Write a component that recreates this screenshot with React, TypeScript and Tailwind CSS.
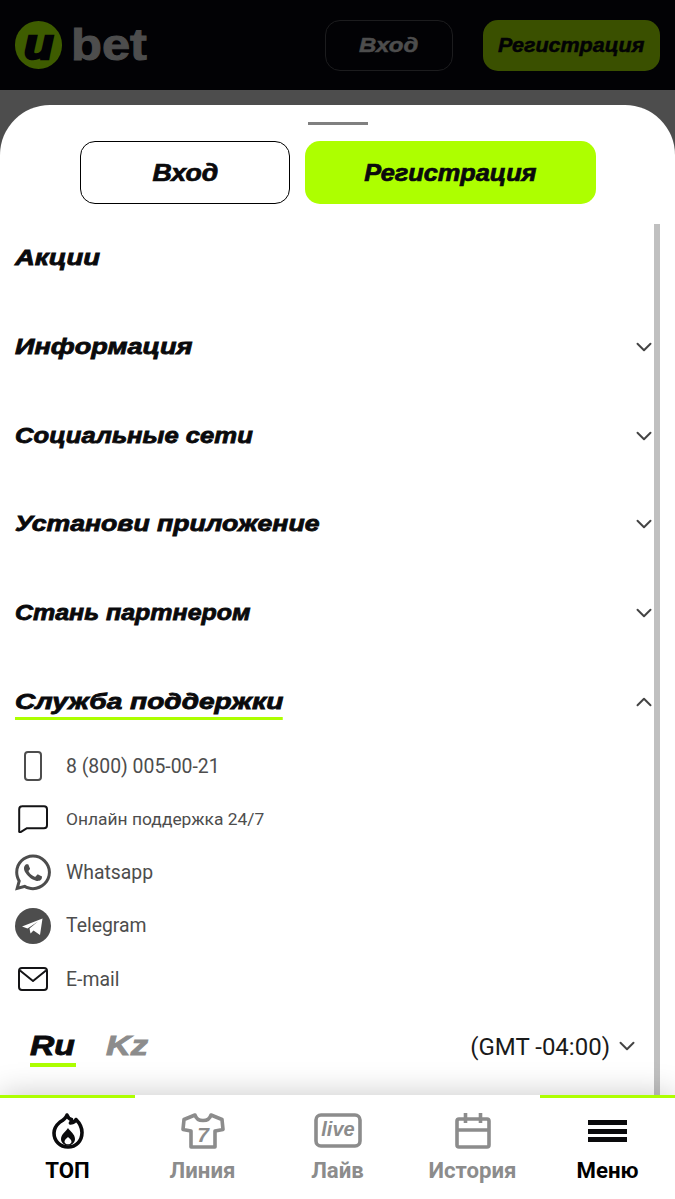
import React from "react";
import { ChevronDown, ChevronUp } from "lucide-react";
import { FaWhatsapp } from "react-icons/fa";

const wide = "font-['Liberation_Sans',sans-serif] font-bold italic whitespace-nowrap";

function MenuRow({ label, open, arrow = true, scale }: { label: string; open?: boolean; arrow?: boolean; scale: string }) {
  return (
    <div className="flex h-[68px] shrink-0 items-center justify-between">
      <span className={`${wide} relative origin-left ${scale} text-[22px] leading-[28px] text-[#0a0a0c] [-webkit-text-stroke:0.8px_#0a0a0c]`}>
        {label}
        {open && <span className="absolute bottom-[-4px] left-0 right-0 h-[3px] bg-[#adff00]" />}
      </span>
      {arrow &&
        (open ? (
          <ChevronUp className="mr-[-3px] size-[26px] text-[#444]" strokeWidth={1.8} />
        ) : (
          <ChevronDown className="mr-[-3px] size-[26px] text-[#444]" strokeWidth={1.8} />
        ))}
    </div>
  );
}

function Contact({ icon, label, small }: { icon: React.ReactNode; label: string; small?: boolean }) {
  return (
    <div className="flex h-[53.3px] items-center">
      <div className="flex w-[36px] justify-center">{icon}</div>
      <span className={`ml-[15px] font-['Roboto',sans-serif] text-[#4d4d4d] ${small ? "text-[17.4px]" : "text-[19.4px]"}`}>{label}</span>
    </div>
  );
}

function NavItem({ icon, label, active, line }: { icon: React.ReactNode; label: string; active?: boolean; line?: boolean }) {
  return (
    <div className={`flex flex-col items-center border-t-[3px] pt-[15px] ${line ? "border-[#adff00]" : "border-transparent"}`}>
      <div className="flex h-[36px] items-center justify-center">{icon}</div>
      <span className={`mt-[7px] font-['Roboto',sans-serif] text-[22.2px] font-bold leading-[28px] ${active ? "text-black" : "text-[#8c8c8c]"}`}>{label}</span>
    </div>
  );
}

export default function App() {
  return (
    <div className="flex h-[1199px] w-[675px] flex-col overflow-hidden bg-white">
      <header className="flex h-[90px] shrink-0 items-center bg-[#020205] pl-[15px] pr-[15px]">
        <div className="flex items-center">
          <div className="flex h-[48px] w-[47px] items-center justify-center rounded-full bg-[#3e5c00]">
            <span className="scale-x-[1.15] font-['Liberation_Sans',sans-serif] text-[42px] font-bold italic leading-[40px] text-[#020205] [-webkit-text-stroke:2.5px_#020205]">u</span>
          </div>
          <span className="ml-[9px] origin-left scale-x-[1.15] font-['Liberation_Sans',sans-serif] text-[44px] font-bold leading-[40px] text-[#4d4d4d] [-webkit-text-stroke:1px_#4d4d4d]">bet</span>
        </div>
        <div className="ml-auto flex gap-[30px]">
          <div className="flex h-[51px] w-[128px] items-center justify-center rounded-[15px] border border-[#1c1c1e]">
            <span className={`${wide} scale-x-[1.2] text-[20px] text-[#4d4d4d] [-webkit-text-stroke:0.5px_#4d4d4d]`}>Вход</span>
          </div>
          <div className="flex h-[51px] w-[177px] items-center justify-center rounded-[15px] bg-[#3a5000]">
            <span className={`${wide} scale-x-[1.075] text-[20px] text-[#020205] [-webkit-text-stroke:0.5px_#020205]`}>Регистрация</span>
          </div>
        </div>
      </header>

      <div className="flex min-h-0 flex-1 flex-col bg-[#4d4d4d] pt-[15px]">
        <div className="flex min-h-0 flex-1 flex-col rounded-t-[50px] bg-white">
          <div className="mx-auto mt-[17px] h-[3px] w-[60px] bg-[#808080]" />
          <div className="ml-[80px] mt-[16px] flex gap-[15px]">
            <div className="flex h-[63px] w-[210px] items-center justify-center rounded-[15px] border border-black">
              <span className={`${wide} relative top-[1px] scale-x-[1.16] text-[23px] text-[#0a0a0c] [-webkit-text-stroke:0.7px_#0a0a0c]`}>Вход</span>
            </div>
            <div className="flex h-[63px] w-[291px] items-center justify-center rounded-[15px] bg-[#adff00]">
              <span className={`${wide} relative top-[1px] scale-x-[1.1] text-[23px] text-[#0a0a0c] [-webkit-text-stroke:0.7px_#0a0a0c]`}>Регистрация</span>
            </div>
          </div>

          <div className="mr-[15px] mt-[20px] flex min-h-0 flex-1">
            <div className="min-w-0 flex-1 pl-[15px]">
              <div className="flex flex-col gap-[20.8px]">
                <MenuRow label="Акции" arrow={false} scale="scale-x-[1.25]" />
                <MenuRow label="Информация" scale="scale-x-[1.23]" />
                <MenuRow label="Социальные сети" scale="scale-x-[1.165]" />
                <MenuRow label="Установи приложение" scale="scale-x-[1.21]" />
                <MenuRow label="Стань партнером" scale="scale-x-[1.135]" />
                <MenuRow label="Служба поддержки" open scale="scale-x-[1.275]" />
              </div>
              <div className="mt-[3.500px] flex flex-col">
                <Contact
                  label="8 (800) 005-00-21"
                  icon={
                    <svg width="18" height="30" viewBox="0 0 18 30" fill="none" stroke="#4d4d4d" strokeWidth="2">
                      <rect x="1" y="1" width="16" height="28" rx="3" />
                    </svg>
                  }
                />
                <Contact
                  small
                  label="Онлайн поддержка 24/7"
                  icon={
                    <svg width="30" height="28" viewBox="0 0 30 28" fill="none" stroke="#141416" strokeWidth="2" strokeLinejoin="round">
                      <path d="M4 1.200h22a3 3 0 0 1 3 3v16a3 3 0 0 1-3 3H9l-6 3.600a1 1 0 0 1-1.800-.8V4.200a3 3 0 0 1 3-3z" />
                    </svg>
                  }
                />
                <Contact label="Whatsapp" icon={<FaWhatsapp size={41} color="#4d4d4d" />} />
                <Contact
                  label="Telegram"
                  icon={
                    <svg width="36" height="36" viewBox="0 0 36 36">
                      <circle cx="18" cy="18" r="18" fill="#4d4d4d" />
                      <path d="M7 18.500 27.500 10.500 25 27 18.500 22.500 15.500 25.500 14.500 20.500 23 13.500 12.500 20.500Z" fill="#fff" />
                    </svg>
                  }
                />
                <Contact
                  label="E-mail"
                  icon={
                    <svg width="30" height="24" viewBox="0 0 30 24" fill="none" stroke="#141416" strokeWidth="2" strokeLinejoin="round">
                      <rect x="1" y="1" width="28" height="22" rx="3" />
                      <path d="M2 3.500 15 14 28 3.500" />
                    </svg>
                  }
                />
              </div>
              <div className="mt-[24.500px] flex items-start justify-between">
                <div className="ml-[15px] flex gap-[30px]">
                  <div className="border-b-[4px] border-[#adff00] pb-[1px]">
                    <span className={`${wide} block w-[46px] origin-left scale-x-[1.2] text-[28px] leading-[32px] text-[#0a0a0c] [-webkit-text-stroke:0.9px_#0a0a0c]`}>Ru</span>
                  </div>
                  <span className={`${wide} h-[32px] w-[42px] origin-left scale-x-[1.23] text-[28px] leading-[32px] text-[#8c8c8c] [-webkit-text-stroke:0.9px_#8c8c8c]`}>Kz</span>
                </div>
                <div className="flex items-center pr-[14px]">
                  <span className="relative top-[1px] font-['Roboto',sans-serif] text-[24px] leading-[32px] text-[#1a1a1a]">(GMT -04:00)</span>
                  <ChevronDown className="ml-[4px] size-[26px] text-[#444]" strokeWidth={1.8} />
                </div>
              </div>
            </div>
            <div className="w-[6px] shrink-0 bg-[#c0c0c0]" />
          </div>
        </div>
      </div>

      <nav className="relative z-10 grid h-[104px] shrink-0 grid-cols-5 bg-white shadow-[0_0_30px_rgba(0,0,0,0.22)]">
        <NavItem
          active
          line
          label="ТОП"
          icon={
            <svg width="32" height="36" viewBox="0 0 32 36" fill="none" stroke="#0a0a0c" strokeWidth="3.6" strokeLinejoin="round">
              <path d="M15 2c1 3 2.500 4 4.500 4.500 0 1.500-.3 2.600-1 3.500 3-.3 5-2 5.500-3.500C27.500 10 30 14 30 19.500 30 28 24 34 16 34S2 28 2 20c0-5 2.500-8 6-11 3.500-2 6-4 7-7z" />
              <path d="M16 15c1.800 3.200 7 6 7 11 0 3.500-3 6.500-7 6.500S9 29.500 9 26c0-5 5-7.500 7-11z" fill="#0a0a0c" stroke="none" />
              <path d="M16 24c1.200 1.500 3.500 2.400 3.500 4.700 0 1.500-1.500 2.600-3.500 2.600s-3.500-1.100-3.500-2.600c0-2.300 2.300-3.200 3.500-4.700z" fill="#fff" stroke="none" />
            </svg>
          }
        />
        <NavItem
          label="Линия"
          icon={
            <svg width="44" height="36" viewBox="0 0 44 36" fill="none" stroke="#8c8c8c" strokeWidth="3.6" strokeLinejoin="round">
              <path d="M14 2 3 6.500 2 16.500l8 1.500V34h24V18l8-1.500-1-10L30 2c-1 3.500-4 5.500-8 5.500S15 5.500 14 2z" />
              <text x="22" y="29" textAnchor="middle" fontFamily="'Liberation Sans',sans-serif" fontSize="21" fontWeight="700" fontStyle="italic" fill="#8c8c8c" stroke="none">7</text>
            </svg>
          }
        />
        <NavItem
          label="Лайв"
          icon={
            <svg width="48" height="36" viewBox="0 0 48 36" fill="none" stroke="#8c8c8c" strokeWidth="3.6">
              <rect x="2" y="2" width="44" height="31" rx="5" />
              <text x="24" y="23" textAnchor="middle" fontFamily="'Liberation Sans',sans-serif" fontSize="20" fontWeight="700" fontStyle="italic" fill="#8c8c8c" stroke="none">live</text>
            </svg>
          }
        />
        <NavItem
          label="История"
          icon={
            <svg width="36" height="36" viewBox="0 0 36 36" fill="none" stroke="#8c8c8c" strokeWidth="3.6">
              <rect x="2" y="6" width="32" height="28" rx="2" />
              <path d="M2 17h32M10.500 0v10M25.500 0v10" />
            </svg>
          }
        />
        <NavItem
          active
          line
          label="Меню"
          icon={
            <svg width="39" height="24" viewBox="0 0 39 24">
              <path d="M0 1h39v5H0zM0 10h39v5H0zM0 18h39v5H0z" fill="#0a0a0c" />
            </svg>
          }
        />
      </nav>
    </div>
  );
}
